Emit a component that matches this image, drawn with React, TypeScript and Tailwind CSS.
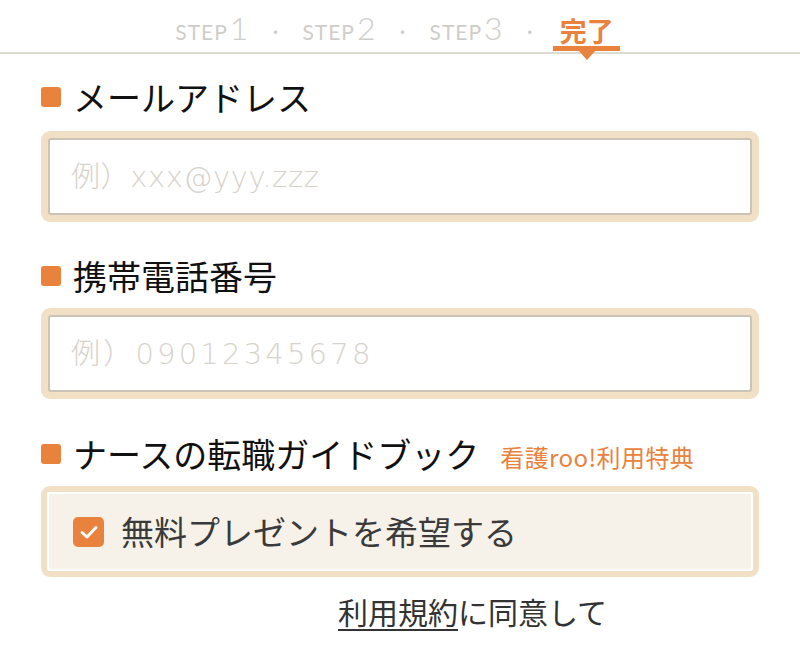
import React from "react";

const jp = { fontFamily: '"Noto Sans CJK JP", "Noto Sans", sans-serif' };
const ph = { fontFamily: '"DejaVu Sans", "Noto Sans CJK JP", sans-serif' };

function Step({ n }: { n: string }) {
  return (
    <span className="flex items-baseline text-[#cfcdca]" style={{ fontFamily: '"Lato", "Noto Sans", sans-serif' }}>
      <span className="text-[21px] leading-none tracking-[1px]">STEP</span>
      <span className="text-[32px] leading-none font-light ml-[2px]">{n}</span>
    </span>
  );
}

function Dot() {
  return <span className="text-[16px] leading-none text-[#cfcdca] mb-[5px]" style={jp}>・</span>;
}

function Label({ text, extra }: { text: string; extra?: string }) {
  return (
    <div className="flex items-center h-[40px]">
      <span className="w-[20px] h-[20px] rounded-[3px] bg-[#e8823c] shrink-0" />
      <span className="ml-[12px] text-[34px] leading-none text-[#111]" style={jp}>
        {text}
      </span>
      {extra && (
        <span className="ml-[21px] mt-[6px] text-[24px] tracking-[0.4px] leading-none text-[#e8823c]" style={jp}>
          {extra}
        </span>
      )}
    </div>
  );
}

function Field({ placeholder, wide }: { placeholder: string; wide?: boolean }) {
  return (
    <div className="rounded-[9px] bg-[#f1e0c6] p-[7px] h-[91px]">
      <input
        readOnly
        placeholder={placeholder}
        className={
          wide
            ? "w-full h-full border-2 border-[#cbc3b6] rounded-[3px] bg-white pl-[21px] text-[29px] font-extralight tracking-[3.2px] outline-none placeholder:text-[#d7d3cc]"
            : "w-full h-full border-2 border-[#cbc3b6] rounded-[3px] bg-white pl-[21px] text-[29px] font-extralight tracking-[0.6px] outline-none placeholder:text-[#d7d3cc]"
        }
        style={ph}
      />
    </div>
  );
}

export default function App() {
  return (
    <div className="w-[800px] h-[647px] bg-white overflow-hidden" style={jp}>
      <div className="h-[54px] border-b-2 border-[#dedbd5] flex justify-center items-end gap-[19px] pb-[8px] pr-[11px]">
        <Step n="1" />
        <Dot />
        <Step n="2" />
        <Dot />
        <Step n="3" />
        <Dot />
        <span className="relative ml-[3px] text-[27px] font-bold leading-none text-[#e8823c]" style={jp}>
          完了
          <span className="absolute left-[-7px] right-[-6px] top-[29px] h-[5px] bg-[#e8823c]" />
          <span className="absolute left-1/2 -translate-x-1/2 top-[33px] w-0 h-0 border-l-[9px] border-r-[9px] border-t-[10px] border-l-transparent border-r-transparent border-t-[#e8823c]" />
        </span>
      </div>

      <div className="px-[41px]">
        <div className="mt-[23px]">
          <Label text="メールアドレス" />
        </div>
        <div className="mt-[14px]">
          <Field placeholder="例）xxx@yyy.zzz" />
        </div>
        <div className="mt-[34px]">
          <Label text="携帯電話番号" />
        </div>
        <div className="mt-[12px]">
          <Field placeholder="例）09012345678" wide />
        </div>
        <div className="mt-[35px]">
          <Label text="ナースの転職ガイドブック" extra="看護roo!利用特典" />
        </div>
        <div className="mt-[12px] rounded-[9px] bg-[#f1e0c6] p-[6px]">
          <div className="h-[79px] border-2 border-white rounded-[2px] bg-[#f6f2e9] flex items-center pl-[24px]">
            <span className="w-[31px] h-[30px] rounded-[5px] bg-[#e8823c] flex items-center justify-center shrink-0">
              <svg width="20" height="16" viewBox="0 0 20 16" fill="none">
                <path d="M3 8.5 L8 13 L17 3.5" stroke="white" strokeWidth="3" strokeLinecap="round" strokeLinejoin="round" />
              </svg>
            </span>
            <span className="ml-[17px] text-[33px] leading-none text-[#3a3a3a]" style={jp}>
              無料プレゼントを希望する
            </span>
          </div>
        </div>
        <div className="mt-[19px] pl-[297px] text-[30px] leading-none text-[#333]" style={jp}>
          <span className="underline underline-offset-[5px] decoration-[2px]">利用規約</span>に同意して
        </div>
      </div>
    </div>
  );
}
